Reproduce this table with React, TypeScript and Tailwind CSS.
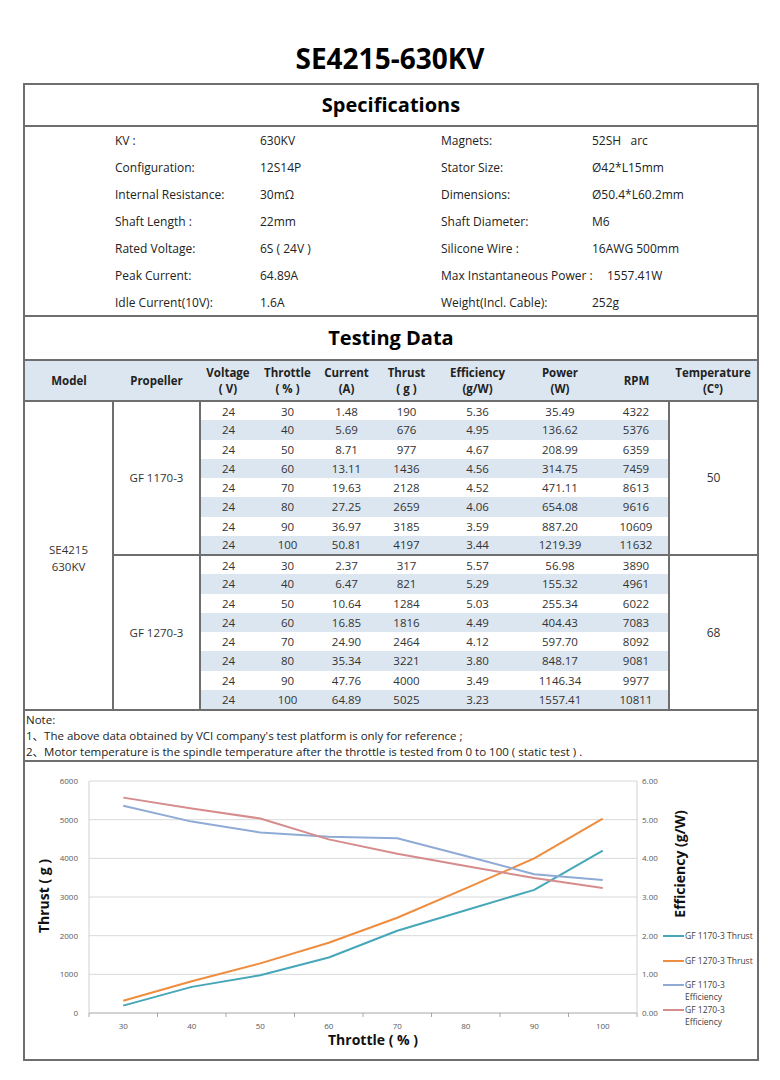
const specs = [
  ["KV :", "630KV", "Magnets:", "52SH   arc"],
  ["Configuration:", "12S14P", "Stator Size:", "Ø42*L15mm"],
  ["Internal Resistance:", "30mΩ", "Dimensions:", "Ø50.4*L60.2mm"],
  ["Shaft Length :", "22mm", "Shaft Diameter:", "M6"],
  ["Rated Voltage:", "6S ( 24V )", "Silicone Wire :", "16AWG 500mm"],
  ["Peak Current:", "64.89A", "Max Instantaneous Power :", "1557.41W"],
  ["Idle Current(10V):", "1.6A", "Weight(Incl. Cable):", "252g"],
]

type Row = [number, number, string, number, string, string, number]

const groups: { prop: string; temp: string; rows: Row[] }[] = [
  {
    prop: "GF 1170-3",
    temp: "50",
    rows: [
      [24, 30, "1.48", 190, "5.36", "35.49", 4322],
      [24, 40, "5.69", 676, "4.95", "136.62", 5376],
      [24, 50, "8.71", 977, "4.67", "208.99", 6359],
      [24, 60, "13.11", 1436, "4.56", "314.75", 7459],
      [24, 70, "19.63", 2128, "4.52", "471.11", 8613],
      [24, 80, "27.25", 2659, "4.06", "654.08", 9616],
      [24, 90, "36.97", 3185, "3.59", "887.20", 10609],
      [24, 100, "50.81", 4197, "3.44", "1219.39", 11632],
    ],
  },
  {
    prop: "GF 1270-3",
    temp: "68",
    rows: [
      [24, 30, "2.37", 317, "5.57", "56.98", 3890],
      [24, 40, "6.47", 821, "5.29", "155.32", 4961],
      [24, 50, "10.64", 1284, "5.03", "255.34", 6022],
      [24, 60, "16.85", 1816, "4.49", "404.43", 7083],
      [24, 70, "24.90", 2464, "4.12", "597.70", 8092],
      [24, 80, "35.34", 3221, "3.80", "848.17", 9081],
      [24, 90, "47.76", 4000, "3.49", "1146.34", 9977],
      [24, 100, "64.89", 5025, "3.23", "1557.41", 10811],
    ],
  },
]

const series = [
  { name: "GF 1170-3 Thrust", color: "#46a7b9", values: groups[0].rows.map((r) => r[3]) },
  { name: "GF 1270-3 Thrust", color: "#ef8c3d", values: groups[1].rows.map((r) => r[3]) },
  { name: "GF 1170-3 Efficiency", color: "#8eaad5", values: groups[0].rows.map((r) => Number(r[4]) * 1000) },
  { name: "GF 1270-3 Efficiency", color: "#d68c8c", values: groups[1].rows.map((r) => Number(r[4]) * 1000) },
]

const PL = 64
const PR = 612
const PT = 19
const PB = 251
const step = (PR - PL) / 8
const cx = (i: number) => PL + step / 2 + step * i
const cy = (v: number) => PB - (v / 6000) * (PB - PT)

function Chart() {
  const throttles = [30, 40, 50, 60, 70, 80, 90, 100]
  return (
    <svg width="732" height="297" className="block">
      {[0, 1, 2, 3, 4, 5, 6].map((k) => (
        <g key={k}>
          <line x1={PL} x2={PR} y1={cy(k * 1000)} y2={cy(k * 1000)} stroke={k === 0 ? "#a6a6a6" : "#d9d9d9"} strokeWidth="1" />
          <text x={53} y={cy(k * 1000) + 3} textAnchor="end" fontSize="8" fill="#595959">{k * 1000}</text>
          <text x={617} y={cy(k * 1000) + 3} fontSize="8" fill="#595959">{k.toFixed(2)}</text>
        </g>
      ))}
      <line x1={PL} x2={PL} y1={PT} y2={PB} stroke="#d0d0d0" />
      <line x1={PR} x2={PR} y1={PT} y2={PB} stroke="#d0d0d0" />
      {Array.from({ length: 9 }).map((_, k) => (
        <line key={k} x1={PL + step * k} x2={PL + step * k} y1={PB} y2={PB + 4} stroke="#a6a6a6" />
      ))}
      {throttles.map((t, i) => (
        <text key={t} x={cx(i)} y={267} textAnchor="middle" fontSize="8" fill="#595959">{t}</text>
      ))}
      {series.map((s) => (
        <polyline
          key={s.name}
          fill="none"
          stroke={s.color}
          strokeWidth="2"
          strokeLinejoin="round"
          points={s.values.map((v, i) => `${cx(i)},${cy(v)}`).join(" ")}
        />
      ))}
      <text transform="translate(24,134) rotate(-90)" textAnchor="middle" fontSize="14" fontWeight="700" fill="#111">Thrust ( g )</text>
      <text transform="translate(660,102) rotate(-90)" textAnchor="middle" fontSize="14" fontWeight="700" fill="#111">Efficiency (g/W)</text>
      <text x={348} y={283} textAnchor="middle" fontSize="14" fontWeight="700" fill="#111">Throttle ( % )</text>

      <line x1={638} x2={659} y1={174} y2={174} stroke={series[0].color} strokeWidth="2" />
      <text x={660} y={177} fontSize="8.5" fill="#404040">GF 1170-3 Thrust</text>
      <line x1={638} x2={659} y1={199} y2={199} stroke={series[1].color} strokeWidth="2" />
      <text x={660} y={202} fontSize="8.5" fill="#404040">GF 1270-3 Thrust</text>
      <line x1={638} x2={659} y1={223} y2={223} stroke={series[2].color} strokeWidth="2" />
      <text x={660} y={226} fontSize="8.5" fill="#404040">GF 1170-3</text>
      <text x={660} y={238} fontSize="8.5" fill="#404040">Efficiency</text>
      <line x1={638} x2={659} y1={248} y2={248} stroke={series[3].color} strokeWidth="2" />
      <text x={660} y={251} fontSize="8.5" fill="#404040">GF 1270-3</text>
      <text x={660} y={263} fontSize="8.5" fill="#404040">Efficiency</text>
    </svg>
  )
}

export default function App() {
  return (
    <div className="w-[780px] h-[1080px] bg-white text-[#222] font-['Open_Sans','Noto_Sans_CJK_SC',sans-serif]">
      <div className="h-[83px] pt-[40px] text-center text-[28px] leading-[36px] font-bold text-black">
        SE4215-630KV
      </div>

      <div className="ml-[23px] w-[736px] border-2 border-[#6e6e6e]">
        {/* specifications */}
        <div className="h-[42px] flex items-center justify-center border-b-2 border-[#6e6e6e] text-[20px] font-bold text-black">
          Specifications
        </div>
        <div className="h-[190px] pl-[90px] grid grid-cols-[145px_181px_151px_1fr] auto-rows-[27px] text-[12px] border-b-2 border-[#6e6e6e]">
          {specs.map((r) =>
            r.map((c, i) => (
              <div
                key={r[0] + i}
                className={`flex items-center whitespace-pre ${i === 3 && r[2].startsWith("Max") ? "pl-[15px]" : ""}`}
              >
                {c}
              </div>
            ))
          )}
        </div>

        {/* testing data */}
        <div className="h-[44px] flex items-center justify-center border-b-2 border-[#6e6e6e] text-[20px] font-bold text-black">
          Testing Data
        </div>
        <table className="w-full table-fixed border-collapse text-center text-[11.5px]">
          <colgroup>
            <col className="w-[88px]" />
            <col className="w-[87px]" />
            <col className="w-[56px]" />
            <col className="w-[63px]" />
            <col className="w-[55px]" />
            <col className="w-[65px]" />
            <col className="w-[77px]" />
            <col className="w-[88px]" />
            <col className="w-[65px]" />
            <col />
          </colgroup>
          <thead>
            <tr className="h-[40px] bg-[#dce6f1] border-b-2 border-[#6e6e6e] font-bold text-[11.5px] leading-[16px] text-[#222]">
              <th>Model</th>
              <th>Propeller</th>
              <th>Voltage<br />( V)</th>
              <th>Throttle<br />( % )</th>
              <th>Current<br />(A)</th>
              <th>Thrust<br />( g )</th>
              <th>Efficiency<br />(g/W)</th>
              <th>Power<br />(W)</th>
              <th>RPM</th>
              <th>Temperature<br />(C°)</th>
            </tr>
          </thead>
          <tbody className="text-[#333]">
            {groups.map((g, gi) =>
              g.rows.map((r, ri) => {
                const last = ri === 7
                const cell = `${ri % 2 === 1 ? "bg-[#dce6f1]" : ""} ${last && gi === 0 ? "border-b-2 border-[#6e6e6e]" : ""}`
                return (
                  <tr key={`${gi}-${ri}`} className="h-[19.25px]">
                    {gi === 0 && ri === 0 && (
                      <td rowSpan={16} className="border-r-2 border-[#6e6e6e] align-middle pt-[4px] leading-[17px]">
                        SE4215<br />630KV
                      </td>
                    )}
                    {ri === 0 && (
                      <td rowSpan={8} className={`border-r-2 border-[#6e6e6e] ${gi === 0 ? "border-b-2" : ""}`}>
                        {g.prop}
                      </td>
                    )}
                    {r.map((v, vi) => (
                      <td key={vi} className={`${cell} p-0 leading-[17px] ${vi === 6 ? "border-r-2 border-[#6e6e6e]" : ""}`}>
                        {v}
                      </td>
                    ))}
                    {ri === 0 && (
                      <td rowSpan={8} className={`text-[12px] ${gi === 0 ? "border-b-2 border-[#6e6e6e]" : ""}`}>
                        {g.temp}
                      </td>
                    )}
                  </tr>
                )
              })
            )}
          </tbody>
        </table>

        {/* notes */}
        <div className="h-[53px] border-t-2 border-b-2 border-[#6e6e6e] pl-[1px] pt-[1px] text-[11.5px] leading-[16px] text-[#222]">
          <div>Note:</div>
          <div>1、The above data obtained by VCI company's test platform is only for reference ;</div>
          <div>2、Motor temperature is the spindle temperature after the throttle is tested from 0 to 100 ( static test ) .</div>
        </div>

        {/* chart */}
        <Chart />
      </div>
    </div>
  )
}
